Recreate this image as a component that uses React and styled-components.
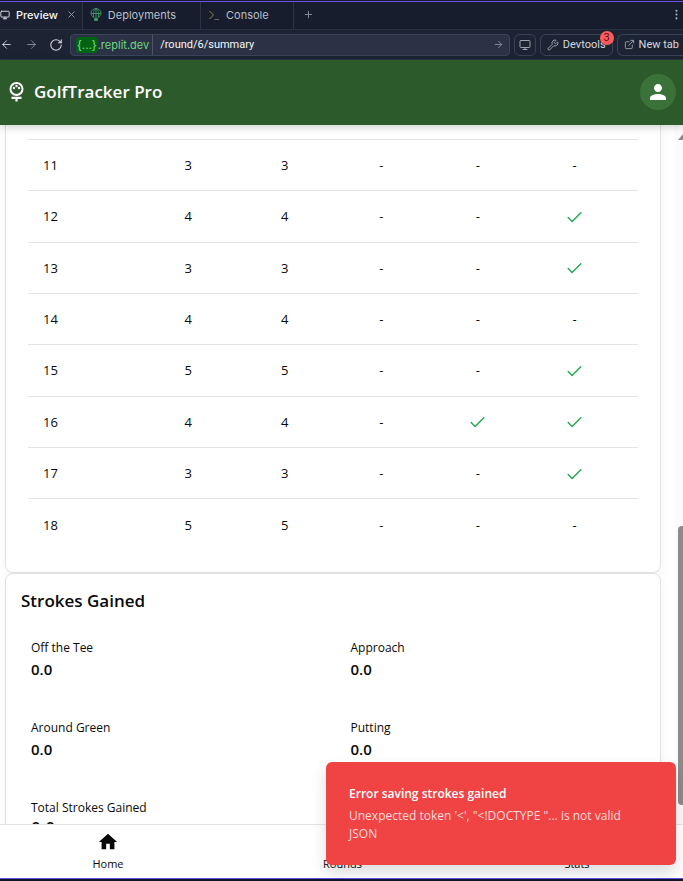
import React from "react";
import styled, { createGlobalStyle } from "styled-components";
import {
  ArrowLeft,
  ArrowRight,
  Check,
  EllipsisVertical,
  ExternalLink,
  Monitor,
  Plus,
  RotateCw,
  Wrench,
  X,
} from "lucide-react";
import { MdHome, MdPerson, MdSportsGolf } from "react-icons/md";

const uiFont = `"Inter", "Liberation Sans", sans-serif`;
const toolFont = `"Roboto", "Liberation Sans", sans-serif`;
const appFont = `"Open Sans", "Noto Sans", sans-serif`;

const GlobalStyle = createGlobalStyle`
  * { box-sizing: border-box; }
  body { margin: 0; background: #0e1525; }
  button, input { font: inherit; color: inherit; }
  button { cursor: pointer; }
`;

const Shell = styled.div`
  display: flex;
  flex-direction: column;
  height: 100vh;
  overflow: hidden;
  border-top: 1px solid #151b2b;
  border-bottom: 2px solid #0e1525;
  font-family: ${appFont};
  color: #0a0a0a;
`;

const Frame = styled.div`
  position: relative;
  display: flex;
  flex-direction: column;
  flex: 1;
  min-height: 0;
  border-top: 1px solid #6f52ea;
  border-bottom: 1px solid #6a4df0;
  background: #fff;
`;

const TabBar = styled.div`
  display: flex;
  flex: none;
  height: 28px;
  background: #171d2d;
  border-bottom: 1px solid #2a3142;
  font-family: ${uiFont};
  font-size: 11px;
`;

const TabGroup = styled.div`
  display: flex;
  align-items: center;
  gap: 8px;
  padding: 0 ${(p) => (p.$active ? 5 : 24)}px 2px ${(p) => (p.$active ? 0 : 7)}px;
  background: ${(p) => (p.$active ? "#1b2131" : "transparent")};
  border-right: 1px solid #2d3446;
  color: ${(p) => (p.$active ? "#f3f5f9" : "#b9bec9")};
`;

const PlainButton = styled.button`
  display: inline-flex;
  align-items: center;
  gap: 6px;
  padding: 0;
  border: 0;
  background: none;
  font-weight: ${(p) => (p.$strong ? 500 : 400)};
  color: ${(p) => p.$color || "inherit"};
  svg { flex: none; }
`;

const AddTab = styled(PlainButton)`
  padding: 0 9px 2px;
  margin-right: auto;
`;

const MenuButton = styled(PlainButton)`
  width: 14px;
  padding-bottom: 2px;
  justify-content: center;
`;

const Toolbar = styled.div`
  display: flex;
  flex: none;
  align-items: center;
  gap: 4px;
  height: 30px;
  background: #1c2333;
  border-bottom: 1px solid #2b3245;
  font-family: ${toolFont};
  font-size: 11px;
  color: #d5d8df;
`;

const NavButtons = styled.div`
  display: flex;
  width: 66px;
  justify-content: space-between;
  padding-right: 3px;
`;

const AddressBar = styled.div`
  display: flex;
  flex: 1;
  min-width: 0;
  height: 22px;
  background: #2b3245;
  border: 1px solid #3c445c;
  border-radius: 4px;
`;

const Host = styled.span`
  display: flex;
  align-items: center;
  padding: 0 3px 0 5px;
  border-right: 1px solid #4b5468;
  border-radius: 4px 0 0 4px;
  color: #6cd97e;
  font-family: ${uiFont};
  white-space: nowrap;
`;

const HostTag = styled.span`
  padding: 1px 1px;
  border-radius: 4px;
  background: #006311;
  font-weight: 500;
`;

const PathInput = styled.input`
  flex: 1;
  min-width: 0;
  padding: 0 7px;
  border: 0;
  outline: 0;
  background: transparent;
  color: #f5f9fc;
`;

const GoButton = styled(PlainButton)`
  padding: 0 5px;
`;

const ToolButton = styled.button`
  position: relative;
  display: flex;
  align-items: center;
  gap: 4px;
  height: 22px;
  padding: 0 ${(p) => p.$pad}px;
  background: #1c2333;
  border: 1px solid #3a4257;
  border-radius: 6px;
  white-space: nowrap;
  svg { flex: none; color: #9da2b0; }
`;

const EdgeButton = styled(ToolButton)`
  padding-right: 4px;
  border-right: 0;
  border-radius: 6px 0 0 6px;
`;

const Badge = styled.span`
  position: absolute;
  top: -4px;
  right: -2px;
  width: 14px;
  height: 14px;
  border-radius: 7px;
  background: #ff5c5c;
  color: #5c0b10;
  font-size: 11px;
  line-height: 14px;
  text-align: center;
`;

const Header = styled.header`
  position: relative;
  z-index: 1;
  display: flex;
  flex: none;
  align-items: center;
  justify-content: space-between;
  height: 65px;
  padding: 0 7px 1px 5px;
  background: #2d5a2a;
  color: #fff;
  box-shadow: 0 2px 8px rgba(0, 0, 0, 0.2);
`;

const Brand = styled.h1`
  display: flex;
  align-items: center;
  gap: 6px;
  margin: 0;
  font-size: 17px;
  font-weight: 600;
  line-height: 24px;
`;

const Avatar = styled.button`
  display: grid;
  place-items: center;
  width: 36px;
  height: 36px;
  padding: 0;
  border: 0;
  border-radius: 50%;
  background: #3b7239;
  color: #fff;
`;

const Viewport = styled.div`
  display: flex;
  flex: 1;
  min-height: 0;
`;

const Content = styled.main`
  flex: 1;
  min-width: 0;
  overflow: hidden;
  padding: 0 14px 0 5px;
`;

const Card = styled.section`
  border: 1px solid #e3e3e5;
  border-radius: 8px;
  background: #fff;
  box-shadow: 0 4px 12px rgba(0, 0, 0, 0.05);
`;

const ScoreCard = styled(Card)`
  padding: 14px 22px 22px;
  border-top: 0;
  border-radius: 0 0 8px 8px;
`;

const ScoreTable = styled.table`
  width: 100%;
  height: 411px;
  table-layout: fixed;
  border-collapse: collapse;
  font-size: 13px;
`;

const ScoreRow = styled.tr`
  height: 12.5%;
  border-top: 1px solid #e4e4e7;
`;

const ScoreCell = styled.td`
  padding: 0;
  text-align: center;
  line-height: 20px;
  svg { display: block; margin: 2px auto 0; }
  &:last-child { padding-right: 15px; }
`;

const HoleCell = styled.th`
  padding: 0 0 0 15px;
  font-weight: 400;
  line-height: 20px;
  text-align: left;
`;

const EdgeCol = styled.col`
  width: 112px;
`;

const GainedCard = styled(Card)`
  padding: 14px 15px;
`;

const CardTitle = styled.h2`
  margin: 0;
  font-size: 17px;
  font-weight: 600;
  line-height: 26px;
`;

const StatGrid = styled.dl`
  display: grid;
  grid-template-columns: 1fr 1fr;
  gap: 15px;
  margin: 13px 0 0;
`;

const Stat = styled.div`
  height: 65px;
  padding: 10px;
`;

const StatLabel = styled.dt`
  font-size: 12px;
  line-height: 22px;
`;

const StatValue = styled.dd`
  margin: 0;
  font-size: ${(p) => (p.$total ? 17 : 15)}px;
  font-weight: 600;
  line-height: ${(p) => (p.$total ? 18 : 20)}px;
`;

const Scrollbar = styled.div`
  display: flex;
  flex-direction: column;
  flex: none;
  width: 8px;
  padding-left: 3px;
  background: #fbfbfb;
`;

const ScrollGap = styled.div`
  flex: ${(p) => p.$size} 1 0;
  svg { display: block; margin-top: 9px; }
`;

const ScrollThumb = styled.div`
  flex: 279 1 0;
  border-radius: 4px 0 0 4px;
  background: #8b8b8b;
`;

const BottomNav = styled.nav`
  display: flex;
  flex: none;
  justify-content: space-between;
  height: 54px;
  padding: 0 73px 0 75px;
  border-top: 1px solid #e4e4e7;
  background: #fff;
`;

const NavLink = styled.a`
  display: flex;
  flex-direction: column;
  align-items: center;
  width: 66px;
  padding-top: 6px;
  gap: 3px;
  color: #0a0a0a;
  font-size: 11px;
  line-height: 16px;
  text-decoration: none;
`;

const Toast = styled.div`
  position: absolute;
  right: 7px;
  bottom: 13px;
  z-index: 2;
  width: 350px;
  max-width: 96%;
  padding: 23px 23px 22px;
  border-radius: 6px;
  background: #f04444;
  color: #fff;
  font-size: 12px;
  box-shadow: 0 8px 16px rgba(0, 0, 0, 0.14);
`;

const ToastTitle = styled.strong`
  display: block;
  font-weight: 600;
  line-height: 18px;
`;

const ToastText = styled.p`
  margin: 4px 0 0;
  max-width: 290px;
  line-height: 18px;
  color: #fbdada;
`;

const holes = [
  [11, 3, 3, false, false, false],
  [12, 4, 4, false, false, true],
  [13, 3, 3, false, false, true],
  [14, 4, 4, false, false, false],
  [15, 5, 5, false, false, true],
  [16, 4, 4, false, true, true],
  [17, 3, 3, false, false, true],
  [18, 5, 5, false, false, false],
];

const stats = [
  { label: "Off the Tee" },
  { label: "Approach" },
  { label: "Around Green" },
  { label: "Putting" },
  { label: "Total Strokes Gained", total: true },
];

function BalloonIcon() {
  return (
    <svg width="12" height="14" viewBox="0 0 12 14" fill="none" stroke="#3f9263" aria-hidden="true">
      <path d="M4 9.5C2 8.5 1 7 1 5a5 4.4 0 0 1 10 0c0 2-1 3.500-3 4.500M1 5.500h10M6 .6V10M4 9.500C3 6 3 3 6 .6c3 2.400 3 5.400 2 8.900" />
      <path d="M4.500 10.500h3v2h-3z" fill="#3f9263" />
    </svg>
  );
}

function PromptIcon() {
  return (
    <svg width="12" height="12" viewBox="0 0 12 12" fill="none" aria-hidden="true">
      <path d="M1.500 2l4 4-4 4" stroke="#9a8747" />
      <path d="M6.500 10.500H11" stroke="#667052" />
    </svg>
  );
}

/* Golf ball with three dimples, resting on a tee. */
function GolfLogo() {
  return (
    <svg width="23" height="22" viewBox="0 0 23 22" fill="none" stroke="#fff" aria-hidden="true">
      <circle cx="11.500" cy="8" r="6" strokeWidth="2" />
      <g fill="#fff" stroke="none">
        <circle cx="9" cy="7" r="1.200" />
        <circle cx="14" cy="7" r="1.200" />
        <circle cx="11.500" cy="5" r="1.200" />
      </g>
      <path d="M6.500 16.800h10M11.500 16v4.500" strokeWidth="2.200" />
    </svg>
  );
}

function Result({ hit }) {
  return hit ? <Check size={19} strokeWidth={1.8} color="#22a652" aria-label="Yes" /> : "-";
}

export default function App() {
  return (
    <Shell>
      <GlobalStyle />
      <Frame>
        <TabBar>
          <TabGroup $active>
            <PlainButton $strong>
              <Monitor size={10} strokeWidth={2} />
              Preview
            </PlainButton>
            <PlainButton $color="#9299a8" aria-label="Close tab"><X size={11} /></PlainButton>
          </TabGroup>
          <TabGroup>
            <PlainButton><BalloonIcon />Deployments</PlainButton>
          </TabGroup>
          <TabGroup>
            <PlainButton><PromptIcon />Console</PlainButton>
          </TabGroup>
          <AddTab $color="#8c92a0" aria-label="New tab"><Plus size={11} /></AddTab>
          <MenuButton $color="#b0b5c0" aria-label="More"><EllipsisVertical size={13} /></MenuButton>
        </TabBar>

        <Toolbar>
          <NavButtons>
            <PlainButton $color="#c9ccd4" aria-label="Back"><ArrowLeft size={13} strokeWidth={1.8} /></PlainButton>
            <PlainButton $color="#858c9b" aria-label="Forward"><ArrowRight size={13} strokeWidth={1.8} /></PlainButton>
            <PlainButton $color="#d5d8df" aria-label="Reload"><RotateCw size={14} strokeWidth={1.8} /></PlainButton>
          </NavButtons>
          <AddressBar>
            <Host><HostTag>{"{...}"}</HostTag>.replit.dev</Host>
            <PathInput aria-label="Path" defaultValue="/round/6/summary" />
            <GoButton $color="#858c9b" aria-label="Go"><ArrowRight size={11} /></GoButton>
          </AddressBar>
          <ToolButton $pad={4} aria-label="Device size"><Monitor size={12} /></ToolButton>
          <ToolButton $pad={6}>
            <Wrench size={12} />
            Devtools
            <Badge>3</Badge>
          </ToolButton>
          <EdgeButton $pad={6}><ExternalLink size={11} />New tab</EdgeButton>
        </Toolbar>

        <Header>
          <Brand><GolfLogo />GolfTracker Pro</Brand>
          <Avatar aria-label="Account"><MdPerson size={24} /></Avatar>
        </Header>

        <Viewport>
          <Content>
            <ScoreCard>
              <ScoreTable>
                <colgroup>
                  <EdgeCol /><col /><col /><col /><col /><EdgeCol />
                </colgroup>
                <tbody>
                  {holes.map(([hole, par, score, ...hits]) => (
                    <ScoreRow key={hole}>
                      <HoleCell scope="row">{hole}</HoleCell>
                      <ScoreCell>{par}</ScoreCell>
                      <ScoreCell>{score}</ScoreCell>
                      {hits.map((hit, i) => (
                        <ScoreCell key={i}><Result hit={hit} /></ScoreCell>
                      ))}
                    </ScoreRow>
                  ))}
                </tbody>
              </ScoreTable>
            </ScoreCard>
            <GainedCard>
              <CardTitle>Strokes Gained</CardTitle>
              <StatGrid>
                {stats.map(({ label, total }) => (
                  <Stat key={label}>
                    <StatLabel>{label}</StatLabel>
                    <StatValue $total={total}>0.0</StatValue>
                  </Stat>
                ))}
              </StatGrid>
            </GainedCard>
          </Content>
          <Scrollbar aria-hidden="true">
            <ScrollGap $size={401}>
              <svg width="5" height="6" viewBox="0 0 5 6"><path d="M0 6L5 0v6z" fill="#8b8b8b" /></svg>
            </ScrollGap>
            <ScrollThumb />
            <ScrollGap $size={19} />
          </Scrollbar>
        </Viewport>

        <BottomNav>
          <NavLink href="#home"><MdHome size={22} />Home</NavLink>
          <NavLink href="#rounds"><MdSportsGolf size={22} />Rounds</NavLink>
          <NavLink href="#stats"><MdPerson size={22} />Stats</NavLink>
        </BottomNav>

        <Toast role="alert">
          <ToastTitle>Error saving strokes gained</ToastTitle>
          <ToastText>Unexpected token '&lt;', "&lt;!DOCTYPE "... is not valid JSON</ToastText>
        </Toast>
      </Frame>
    </Shell>
  );
}
